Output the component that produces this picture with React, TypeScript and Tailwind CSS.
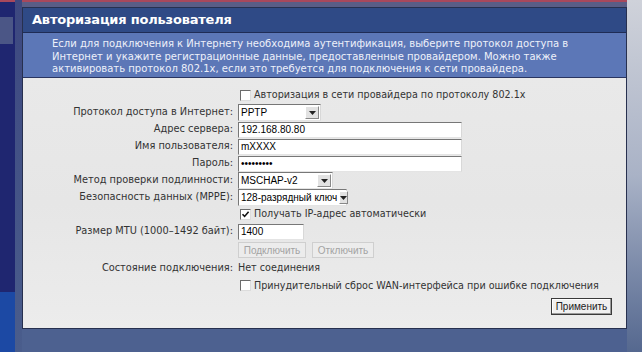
import React from "react";

const label = "text-right text-[9.8px] text-[#333] pr-[5px] whitespace-nowrap";
const verdana = { fontFamily: '"DejaVu Sans", Verdana, sans-serif' };
const tahoma = { fontFamily: '"Liberation Sans", Tahoma, Arial, sans-serif' };

function Box({ checked }: { checked?: boolean }) {
  return (
    <span className="ml-[2px] w-[11px] h-[11px] bg-white border border-t-[#6b6b6b] border-l-[#6b6b6b] border-b-[#dcdcdc] border-r-[#dcdcdc] flex items-center justify-center">
      {checked && (
        <svg width="9" height="9" viewBox="0 0 9 9">
          <path d="M1.5 4.2 L3.6 6.4 L7.6 1.8" stroke="#111" strokeWidth="1.6" fill="none" />
        </svg>
      )}
    </span>
  );
}

function Input({ value, w }: { value: string; w: string }) {
  return (
    <div
      className={`${w} h-[16px] bg-white border border-t-[#777] border-l-[#777] border-b-[#e4e4e4] border-r-[#d8d8d8] text-[10px] text-black px-[2px] flex items-center`}
      style={tahoma}
    >
      {value}
    </div>
  );
}

function Select({ value, w }: { value: string; w: string }) {
  return (
    <div
      className={`${w} h-[17px] bg-white border border-t-[#777] border-l-[#777] border-b-[#e4e4e4] border-r-[#d8d8d8] flex items-center justify-between`}
      style={tahoma}
    >
      <span className="text-[10px] text-black px-[2px] whitespace-nowrap">{value}</span>
      <span className="w-[14px] h-[13px] mr-[1px] bg-[#e2e2e2] border border-t-white border-l-white border-b-[#888] border-r-[#888] flex items-center justify-center">
        <svg width="7" height="4" viewBox="0 0 7 4">
          <path d="M0 0 H7 L3.5 4 Z" fill="#222" />
        </svg>
      </span>
    </div>
  );
}

export default function App() {
  const rows: [string, React.ReactNode][] = [
    ["Протокол доступа в Интернет:", <Select value="PPTP" w="w-[83px]" />],
    ["Адрес сервера:", <Input value="192.168.80.80" w="w-[224px]" />],
    ["Имя пользователя:", <Input value="mXXXX" w="w-[224px]" />],
    ["Пароль:", <Input value="•••••••••" w="w-[224px]" />],
    ["Метод проверки подлинности:", <Select value="MSCHAP-v2" w="w-[95px]" />],
    ["Безопасность данных (MPPE):", <Select value="128-разрядный ключ" w="w-[109px]" />],
  ];

  return (
    <div className="w-[642px] h-[352px] flex overflow-hidden bg-[#4d6190]" style={verdana}>
      <div className="w-[22px] flex">
        <div className="w-[15px] flex flex-col bg-[#1f2670]">
          <div className="h-[2px] bg-[#a8485c]" />
          <div className="h-[15px]" />
          <div className="h-[27px] w-[13px] bg-[#4b5686]" />
          <div className="flex-1" />
          <div className="h-[60px] bg-[#1c49a4]" />
        </div>
        <div className="w-[7px] bg-gradient-to-b from-[#3d4880] to-[#4a5d8c]" />
      </div>

      <div className="w-[605px] flex flex-col">
        <div className="h-[2px] bg-[#a8485c]" />
        <div className="h-[5px] bg-[#5a5d86]" />
        <div className="border border-[#27304f] flex flex-col">
          <div className="h-[25px] bg-[#2f4a86] border-b border-[#1f2c55] flex items-center pl-[9px] text-white font-bold text-[13px] tracking-[-0.2px]">
            Авторизация пользователя
          </div>
          <div className="h-[45px] bg-[#5c77b7] border-b border-[#2a3560] pl-[29px] pt-[5px] text-[10px] leading-[12.5px] text-[#eef1fa]">
            Если для подключения к Интернету необходима аутентификация, выберите протокол доступа в
            <br />
            Интернет и укажите регистрационные данные, предоставленные провайдером. Можно также
            <br />
            активировать протокол 802.1x, если это требуется для подключения к сети провайдера.
          </div>
          <div className="h-[250px] bg-gradient-to-b from-[#e9e9e9] via-[#e6e6e6] to-[#ececec] pt-[9px] flex flex-col">
            <div className="grid grid-cols-[215px_1fr] auto-rows-[17px] items-center">
              <div />
              <div className="flex items-center gap-[3px] text-[9.6px] text-[#333]">
                <Box />
                <span>Авторизация в сети провайдера по протоколу 802.1x</span>
              </div>
              {rows.map(([l, c], i) => (
                <React.Fragment key={i}>
                  <div className={label}>{l}</div>
                  <div className="flex items-center">{c}</div>
                </React.Fragment>
              ))}
              <div />
              <div className="flex items-center gap-[3px] text-[9.6px] text-[#333]">
                <Box checked />
                <span>Получать IP-адрес автоматически</span>
              </div>
              <div className={label}>Размер MTU (1000–1492 байт):</div>
              <div className="flex items-center">
                <Input value="1400" w="w-[66px]" />
              </div>
            </div>
            <div className="grid grid-cols-[215px_1fr] auto-rows-[18px] items-center mt-[1px]">
              <div />
              <div className="flex items-center gap-[6px]" style={tahoma}>
                <button className="h-[16px] w-[68px] border border-[#cfcfcf] bg-[#ececec] text-[10px] text-[#a3a3a3]">
                  Подключить
                </button>
                <button className="h-[16px] w-[62px] border border-[#cfcfcf] bg-[#ececec] text-[10px] text-[#a3a3a3]">
                  Отключить
                </button>
              </div>
              <div className={label}>Состояние подключения:</div>
              <div className="text-[9.6px] text-[#333]">Нет соединения</div>
              <div />
              <div className="flex items-center gap-[3px] text-[9.6px] text-[#333]">
                <Box />
                <span>Принудительный сброс WAN-интерфейса при ошибке подключения</span>
              </div>
            </div>
            <div className="flex justify-end pr-[14px] mt-[3px]">
              <button
                className="h-[17px] w-[61px] border border-[#3a3a3a] bg-[#f0f0f0] text-[10px] text-[#222] shadow-[inset_-1px_-1px_0_#9a9a9a,inset_1px_1px_0_#fff]"
                style={tahoma}
              >
                Применить
              </button>
            </div>
          </div>
        </div>
        <div className="flex-1 bg-[#4d6190]" />
      </div>

      <div className="w-[15px] bg-gradient-to-b from-[#cfd2da] via-[#a9b2c6] to-[#55688f]" />
    </div>
  );
}
